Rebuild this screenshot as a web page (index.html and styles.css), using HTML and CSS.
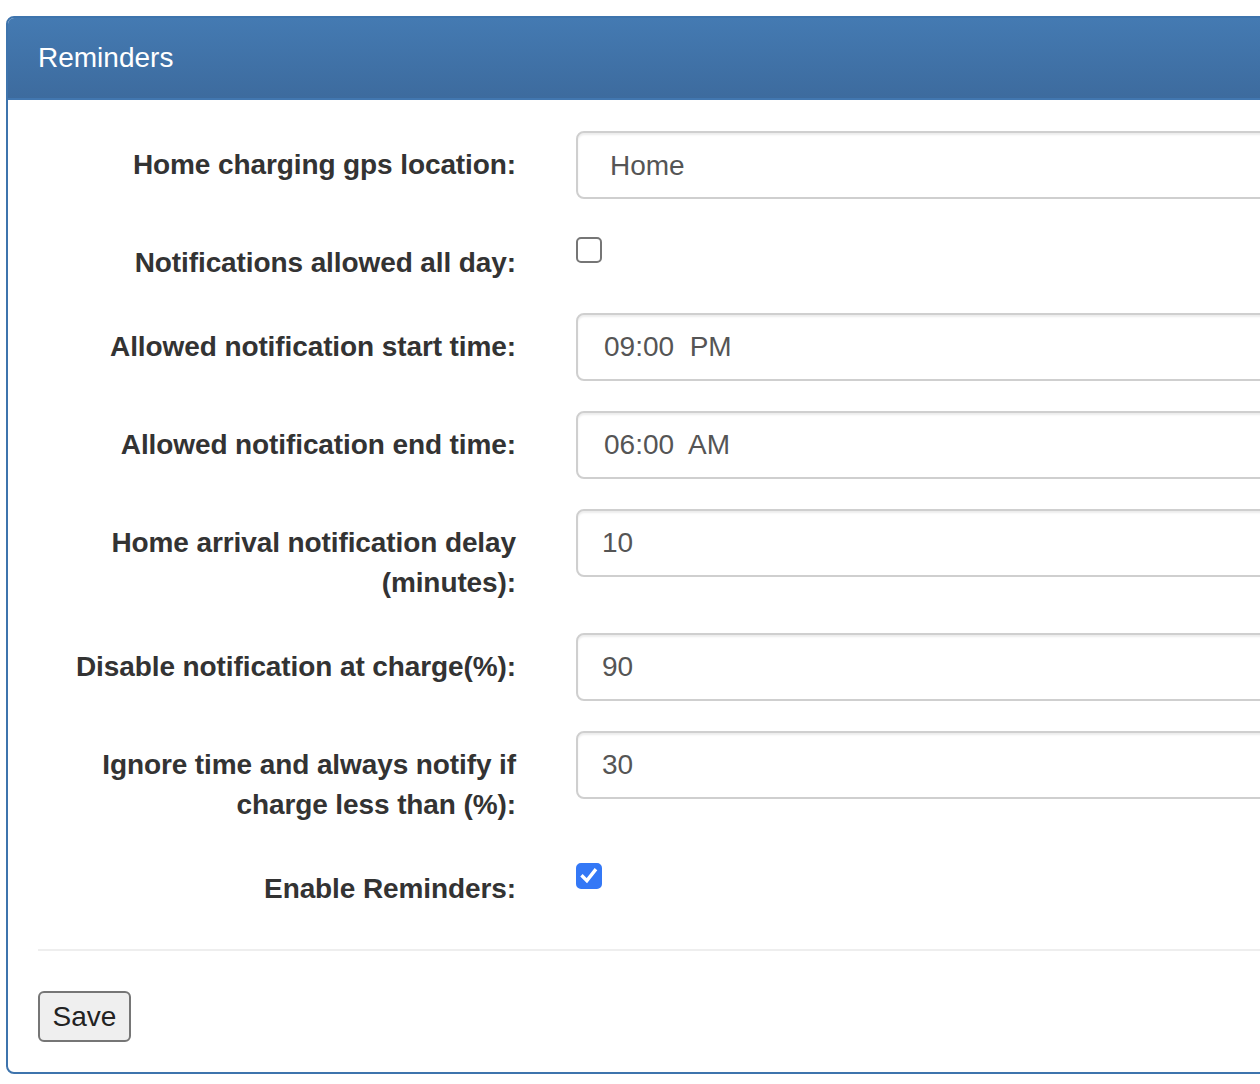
FILE: index.html
```html
<!DOCTYPE html>
<html>
<head>
<meta charset="utf-8">
<title>Reminders</title>
<link rel="stylesheet" href="styles.css">
</head>
<body>
<div class="page">
  <div class="panel">
    <div class="panel-heading"><h3 class="panel-title">Reminders</h3></div>
    <div class="panel-body">
      <form class="form">
        <div class="form-group">
          <label class="control-label">Home charging gps location:</label>
          <div class="control"><select class="form-control select"><option>Home</option></select></div>
        </div>
        <div class="form-group">
          <label class="control-label">Notifications allowed all day:</label>
          <div class="control"><input type="checkbox" class="check"></div>
        </div>
        <div class="form-group">
          <label class="control-label">Allowed notification start time:</label>
          <div class="control"><input type="text" class="form-control time" value="09:00  PM"></div>
        </div>
        <div class="form-group">
          <label class="control-label">Allowed notification end time:</label>
          <div class="control"><input type="text" class="form-control time" value="06:00  AM"></div>
        </div>
        <div class="form-group">
          <label class="control-label">Home arrival notification delay (minutes):</label>
          <div class="control"><input type="text" class="form-control" value="10"></div>
        </div>
        <div class="form-group">
          <label class="control-label">Disable notification at charge(%):</label>
          <div class="control"><input type="text" class="form-control" value="90"></div>
        </div>
        <div class="form-group">
          <label class="control-label">Ignore time and always notify if charge less than (%):</label>
          <div class="control"><input type="text" class="form-control" value="30"></div>
        </div>
        <div class="form-group">
          <label class="control-label">Enable Reminders:</label>
          <div class="control"><input type="checkbox" class="check" checked></div>
        </div>
        <hr class="divider">
        <button type="button" class="btn">Save</button>
      </form>
    </div>
  </div>
</div>
</body>
</html>
```

FILE: styles.css
```css
html, body {
  margin: 0;
  padding: 0;
  background: #fff;
  overflow: hidden;
}
body {
  font-family: "Liberation Sans", Arial, Helvetica, sans-serif;
  color: #333;
}
.page {
  padding: 16px 0 0 6px;
  width: 1500px;
}
.panel {
  width: 1420px;
  border: 2px solid #3e74ad;
  border-radius: 8px;
  overflow: hidden;
  background: #fff;
}
.panel-heading {
  height: 82px;
  box-sizing: border-box;
  padding: 0 30px;
  display: flex;
  align-items: center;
  background: linear-gradient(to bottom, #447ab2 0%, #3d6b9e 100%);
  border-bottom: 2px solid #4277b0;
}
.panel-title {
  margin: 0;
  font-size: 28px;
  font-weight: normal;
  color: #fff;
  line-height: 32px;
}
.panel-body {
  padding: 31px 30px 30px 30px;
}
.form-group {
  display: grid;
  grid-template-columns: 478px 1fr;
  column-gap: 60px;
  margin: 0 0 30px 0;
}
.control-label {
  display: block;
  text-align: right;
  font-weight: bold;
  font-size: 28px;
  letter-spacing: -0.1px;
  line-height: 40px;
  padding-top: 14px;
  color: #333;
}
.control {
  min-width: 0;
}
.form-control {
  display: block;
  box-sizing: border-box;
  width: 100%;
  height: 68px;
  padding: 0 24px;
  font-family: "Liberation Sans", Arial, Helvetica, sans-serif;
  font-size: 28px;
  color: #555;
  background: #fff;
  border: 2px solid #cfcfcf;
  border-radius: 8px;
  box-shadow: inset 0 2px 2px rgba(0, 0, 0, 0.075);
  outline: none;
}
.form-control.time {
  padding-left: 26px;
}
.select {
  -webkit-appearance: none;
  appearance: none;
  padding-left: 32px;
}
.check {
  -webkit-appearance: none;
  appearance: none;
  display: block;
  box-sizing: border-box;
  width: 26px;
  height: 26px;
  margin: 8px 0 0 0;
  border: 2px solid #767676;
  border-radius: 5px;
  background: #fff;
}
.check:checked {
  border-color: #3478f6;
  background-color: #3478f6;
  background-image: url("data:image/svg+xml;utf8,<svg xmlns='http://www.w3.org/2000/svg' viewBox='0 0 26 26'><path d='M5.5 13.5 L10.5 18.5 L20 6.5' fill='none' stroke='white' stroke-width='4' stroke-linecap='square' stroke-linejoin='miter'/></svg>");
  background-size: 100% 100%;
}
.divider {
  margin: 40px 0 40px 0;
  border: 0;
  border-top: 2px solid #eee;
  height: 0;
}
.btn {
  display: block;
  box-sizing: border-box;
  width: 93px;
  height: 51px;
  padding: 0;
  font-family: "Liberation Sans", Arial, Helvetica, sans-serif;
  font-size: 28px;
  color: #222;
  background: #efefef;
  border: 2px solid #767676;
  border-radius: 6px;
}
```
